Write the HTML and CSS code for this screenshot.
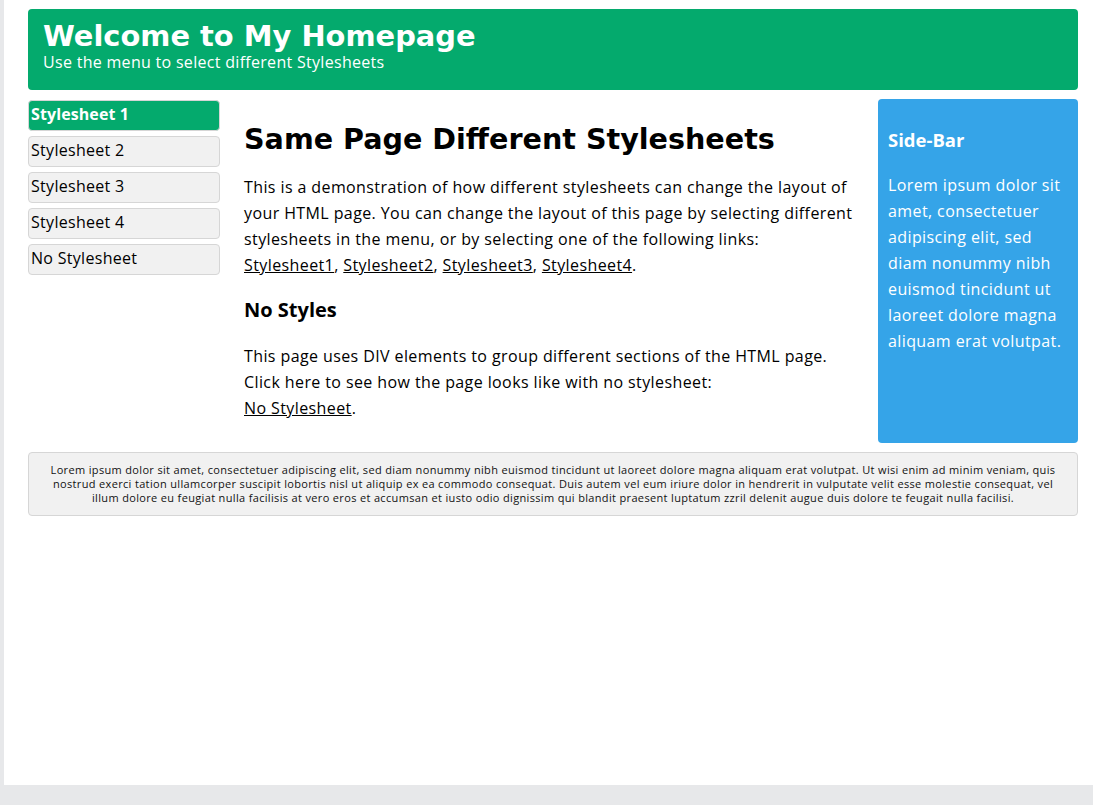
FILE: index.html
```html
<!DOCTYPE html>
<html lang="en">
<head>
<meta charset="utf-8">
<title>Same Page Different Stylesheets</title>
<link rel="stylesheet" href="styles.css">
</head>
<body>
<div class="frame">
  <header class="header">
    <h1 class="title">Welcome to My Homepage</h1>
    <p class="subtitle">Use the menu to select different Stylesheets</p>
  </header>
  <div class="row">
    <nav class="menu">
      <a class="menu-item active" href="#">Stylesheet 1</a>
      <a class="menu-item" href="#">Stylesheet 2</a>
      <a class="menu-item" href="#">Stylesheet 3</a>
      <a class="menu-item" href="#">Stylesheet 4</a>
      <a class="menu-item" href="#">No Stylesheet</a>
    </nav>
    <main class="content">
      <h1 class="content-title">Same Page Different Stylesheets</h1>
      <p class="text">This is a demonstration of how different stylesheets can change the layout of your HTML page. You can change the layout of this page by selecting different stylesheets in the menu, or by selecting one of the following links:<br><a href="#">Stylesheet1</a>, <a href="#">Stylesheet2</a>, <a href="#">Stylesheet3</a>, <a href="#">Stylesheet4</a>.</p>
      <h2 class="content-subtitle">No Styles</h2>
      <p class="text">This page uses DIV elements to group different sections of the HTML page. Click here to see how the page looks like with no stylesheet:<br><a href="#">No Stylesheet</a>.</p>
    </main>
    <aside class="sidebar">
      <h3 class="sidebar-title">Side-Bar</h3>
      <p class="text">Lorem ipsum dolor sit amet, consectetuer adipiscing elit, sed diam nonummy nibh euismod tincidunt ut laoreet dolore magna aliquam erat volutpat.</p>
    </aside>
  </div>
  <footer class="footer">
    <p class="footer-text">Lorem ipsum dolor sit amet, consectetuer adipiscing elit, sed diam nonummy nibh euismod tincidunt ut laoreet dolore magna aliquam erat volutpat. Ut wisi enim ad minim veniam, quis nostrud exerci tation ullamcorper suscipit lobortis nisl ut aliquip ex ea commodo consequat. Duis autem vel eum iriure dolor in hendrerit in vulputate velit esse molestie consequat, vel illum dolore eu feugiat nulla facilisis at vero eros et accumsan et iusto odio dignissim qui blandit praesent luptatum zzril delenit augue duis dolore te feugait nulla facilisi.</p>
  </footer>
</div>
</body>
</html>
```
FILE: styles.css
```css
html, body {
  margin: 0;
  padding: 0;
  background: #e7e8ea;
}

body {
  font-family: "Open Sans", "Noto Sans", sans-serif;
  color: #000;
}

.frame {
  margin-left: 4px;
  height: 785px;
  box-sizing: border-box;
  background: #fff;
  padding: 9px 15px 0 24px;
}

.header {
  background: #04aa6d;
  border-radius: 4px;
  padding: 11px 15px 18px;
  color: #fff;
}

.title {
  margin: 0;
  font-family: "DejaVu Sans", sans-serif;
  font-weight: bold;
  font-size: 28.9px;
  line-height: 32px;
}

.subtitle {
  margin: 0;
  font-size: 16px;
  line-height: 20px;
  letter-spacing: 0.3px;
}

.row {
  display: flex;
  align-items: stretch;
  margin-top: 9px;
}

.menu {
  width: 192px;
  flex: none;
  display: flex;
  flex-direction: column;
  gap: 5px;
  margin-top: 1px;
}

.menu-item {
  display: block;
  background: #f1f1f1;
  border: 1px solid #d6d6d6;
  border-radius: 4px;
  padding: 0 2px 2px;
  font-size: 16px;
  line-height: 27px;
  letter-spacing: 0.3px;
  color: #000;
  text-decoration: none;
}

.menu-item.active {
  background: #04aa6d;
  color: #fff;
  font-weight: bold;
  letter-spacing: 0.1px;
}

.content {
  flex: 1;
  padding: 22px 16px 22px 24px;
}

.content-title {
  margin: 0 0 17px;
  font-family: "DejaVu Sans", sans-serif;
  font-weight: bold;
  font-size: 28.6px;
  line-height: 36px;
}

.text {
  margin: 0;
  font-size: 16px;
  line-height: 26px;
  letter-spacing: 0.4px;
}

.text a {
  color: #000;
  text-decoration: underline;
}

.content-subtitle {
  margin: 18px 0 19px;
  font-size: 20px;
  font-weight: bold;
  line-height: 28px;
}

.sidebar {
  width: 200px;
  flex: none;
  box-sizing: border-box;
  background: #35a4e8;
  border-radius: 4px;
  padding: 10px;
  color: #fff;
}

.sidebar-title {
  margin: 19px 0 20px;
  font-size: 18.5px;
  font-weight: bold;
  line-height: 24px;
}

.footer {
  margin-top: 9px;
  background: #f1f1f1;
  border: 1px solid #d6d6d6;
  border-radius: 4px;
  padding: 10px 16px;
}

.footer-text {
  margin: 0;
  font-size: 11px;
  line-height: 14px;
  letter-spacing: 0.34px;
  text-align: center;
  color: #111;
}
```
